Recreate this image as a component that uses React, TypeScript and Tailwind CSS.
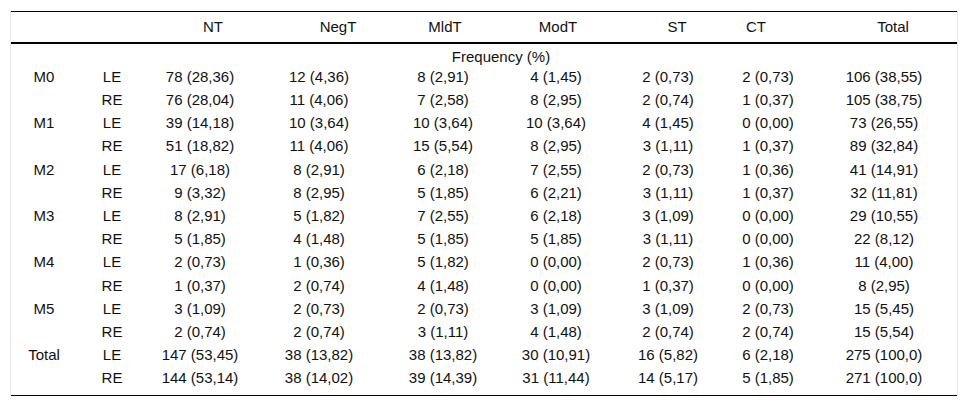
import React from 'react';

type Row = { group?: string; eye: string; values: string[] };

const rows: Row[] = [
  { group: 'M0', eye: 'LE', values: ['78 (28,36)', '12 (4,36)', '8 (2,91)', '4 (1,45)', '2 (0,73)', '2 (0,73)', '106 (38,55)'] },
  { eye: 'RE', values: ['76 (28,04)', '11 (4,06)', '7 (2,58)', '8 (2,95)', '2 (0,74)', '1 (0,37)', '105 (38,75)'] },
  { group: 'M1', eye: 'LE', values: ['39 (14,18)', '10 (3,64)', '10 (3,64)', '10 (3,64)', '4 (1,45)', '0 (0,00)', '73 (26,55)'] },
  { eye: 'RE', values: ['51 (18,82)', '11 (4,06)', '15 (5,54)', '8 (2,95)', '3 (1,11)', '1 (0,37)', '89 (32,84)'] },
  { group: 'M2', eye: 'LE', values: ['17 (6,18)', '8 (2,91)', '6 (2,18)', '7 (2,55)', '2 (0,73)', '1 (0,36)', '41 (14,91)'] },
  { eye: 'RE', values: ['9 (3,32)', '8 (2,95)', '5 (1,85)', '6 (2,21)', '3 (1,11)', '1 (0,37)', '32 (11,81)'] },
  { group: 'M3', eye: 'LE', values: ['8 (2,91)', '5 (1,82)', '7 (2,55)', '6 (2,18)', '3 (1,09)', '0 (0,00)', '29 (10,55)'] },
  { eye: 'RE', values: ['5 (1,85)', '4 (1,48)', '5 (1,85)', '5 (1,85)', '3 (1,11)', '0 (0,00)', '22 (8,12)'] },
  { group: 'M4', eye: 'LE', values: ['2 (0,73)', '1 (0,36)', '5 (1,82)', '0 (0,00)', '2 (0,73)', '1 (0,36)', '11 (4,00)'] },
  { eye: 'RE', values: ['1 (0,37)', '2 (0,74)', '4 (1,48)', '0 (0,00)', '1 (0,37)', '0 (0,00)', '8 (2,95)'] },
  { group: 'M5', eye: 'LE', values: ['3 (1,09)', '2 (0,73)', '2 (0,73)', '3 (1,09)', '3 (1,09)', '2 (0,73)', '15 (5,45)'] },
  { eye: 'RE', values: ['2 (0,74)', '2 (0,74)', '3 (1,11)', '4 (1,48)', '2 (0,74)', '2 (0,74)', '15 (5,54)'] },
  { group: 'Total', eye: 'LE', values: ['147 (53,45)', '38 (13,82)', '38 (13,82)', '30 (10,91)', '16 (5,82)', '6 (2,18)', '275 (100,0)'] },
  { eye: 'RE', values: ['144 (53,14)', '38 (14,02)', '39 (14,39)', '31 (11,44)', '14 (5,17)', '5 (1,85)', '271 (100,0)'] },
];

// header labels sit a little off the data centres
const headers = [
  { label: 'NT', cls: 'pl-[26px]' },
  { label: 'NegT', cls: 'pl-[38px]' },
  { label: 'MldT', cls: 'pl-[4px]' },
  { label: 'ModT', cls: 'pl-[4px]' },
  { label: 'ST', cls: 'pl-[18px]' },
  { label: 'CT', cls: 'pr-[24px]' },
  { label: 'Total', cls: 'pl-[18px]' },
];

export default function App() {
  return (
    <div
      className="w-[968px] h-[407px] bg-white pt-[11px] text-[15px] text-[#111]"
      style={{ fontFamily: '"Liberation Sans", Arial, sans-serif' }}
    >
      <div className="ml-[10px] w-[948px] border-x border-[#e6e6e6]">
        <table className="w-[946px] table-fixed border-t border-b border-black">
          <colgroup>
            <col className="w-[66px]" />
            <col className="w-[70px]" />
            <col className="w-[106px]" />
            <col className="w-[132px]" />
            <col className="w-[116px]" />
            <col className="w-[110px]" />
            <col className="w-[114px]" />
            <col className="w-[86px]" />
            <col className="w-[146px]" />
          </colgroup>
          <thead>
            <tr className="h-[31px] border-b-2 border-black">
              <th className="font-normal" />
              <th className="font-normal" />
              {headers.map((h) => (
                <th key={h.label} className={`font-normal text-center p-0 ${h.cls}`}>
                  {h.label}
                </th>
              ))}
            </tr>
          </thead>
          <tbody>
            <tr className="h-[23px]">
              <td colSpan={9} className="text-center p-0 pl-[34px] pt-[4px] leading-[16px]">
                Frequency (%)
              </td>
            </tr>
            {rows.map((r, i) => (
              <tr key={i} className="h-[23.2px]">
                <td className="text-center p-0">{r.group ?? ''}</td>
                <td className="text-center p-0">{r.eye}</td>
                {r.values.map((v, j) => (
                  <td key={j} className="text-center p-0 whitespace-nowrap">
                    {v}
                  </td>
                ))}
              </tr>
            ))}
            <tr className="h-[5px]">
              <td colSpan={9} />
            </tr>
          </tbody>
        </table>
      </div>
    </div>
  );
}
